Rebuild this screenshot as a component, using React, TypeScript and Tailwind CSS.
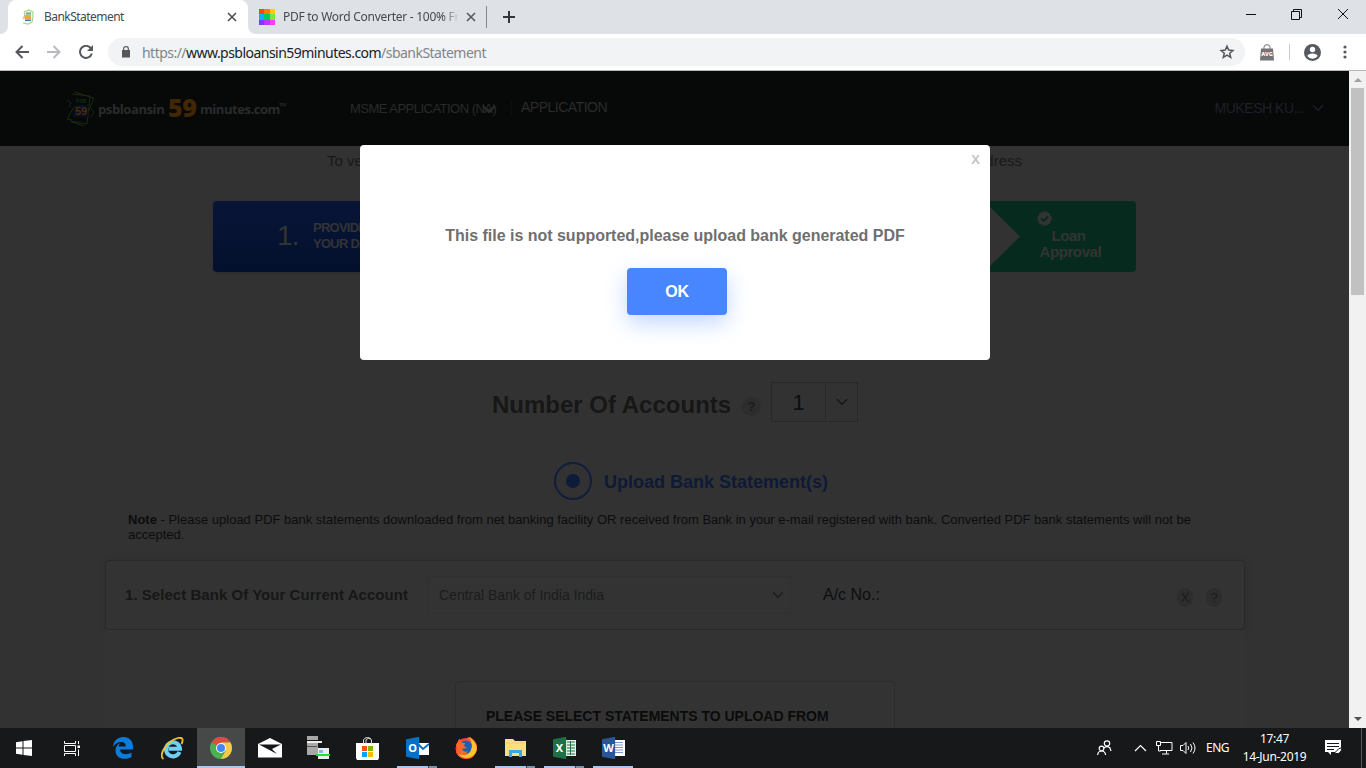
import type { ReactNode } from "react";

const Chevron = ({ className = "" }: { className?: string }) => (
  <svg className={className} width="12" height="8" viewBox="0 0 12 8" fill="none" stroke="currentColor" strokeWidth="1.4">
    <path d="M1 1.2l5 5 5-5" />
  </svg>
);

const Close = ({ className = "" }: { className?: string }) => (
  <svg className={className} width="10" height="10" viewBox="0 0 10 10" stroke="currentColor" strokeWidth="1.6">
    <path d="M1 1l8 8M9 1L1 9" />
  </svg>
);

const tiles = [
  "bg-[#ff4a0c]", "bg-[#ff7e00]", "bg-[#ffcf00]",
  "bg-[#00b4ff]", "bg-[#00cb5e]", "bg-[#7ee53f]",
  "bg-[#7a3cff]", "bg-[#b53cff]", "bg-[#ff3cf0]",
];

function TabStrip() {
  return (
    <div className="flex h-[34px] shrink-0 bg-[#dee1e6] text-[12px] text-[#45494d]">
      <div className="flex h-full w-2 items-end bg-white"><div className="h-full w-full rounded-br-lg bg-[#dee1e6]" /></div>
      <div className="flex w-[240px] items-center rounded-t-lg bg-white pl-3">
        <svg width="16" height="16" viewBox="0 0 16 16" fill="none">
          <path d="M4 3l5-2 4 2v5l-1 5-4 2-5-1M4 3l1 3-2 4" stroke="#a6d48d" strokeWidth="1.2" />
          <path d="M5 4l6-1 1 9-7 1z" fill="#e0efcf" />
          <path d="M6 3.500h5v2H6z" fill="#62b77c" />
          <path d="M4.500 6h6.500v4H4.500z" fill="#eda640" />
          <path d="M5 10.500h6V12H5z" fill="#4a78ba" />
        </svg>
        <span className="ml-2 tracking-[-0.54px]">BankStatement</span>
        <Close className="mr-[11px] ml-auto text-[#4a4e52]" />
      </div>
      <div className="flex h-full w-[11px] bg-white"><div className="h-full w-full rounded-bl-lg bg-[#dee1e6]" /></div>
      <div className="flex w-[228px] items-center border-r border-[#85898e] [border-image:linear-gradient(transparent_20%,#85898e_20%,#85898e_80%,transparent_80%)_1]">
        <div className="grid h-4 w-4 grid-cols-3">{tiles.map((c) => <i key={c} className={c} />)}</div>
        <span className="ml-2 w-[176px] overflow-hidden tracking-[-0.27px] whitespace-nowrap [mask-image:linear-gradient(to_right,#000_91%,transparent)]">PDF to Word Converter - 100% Fr</span>
        <Close className="ml-[7px] text-[#55595d]" />
      </div>
      <div className="flex items-center pl-4">
        <svg width="12" height="12" viewBox="0 0 12 12" stroke="#33373b" strokeWidth="2"><path d="M6 0v12M0 6h12" /></svg>
      </div>
      <div className="mt-[9px] mr-[18px] ml-auto flex h-3 items-center gap-[36px]">
        <svg width="10" height="10" viewBox="0 0 10 10" stroke="#111" className="-mr-px -translate-y-px"><path d="M0 5.5h10" /></svg>
        <svg width="11" height="11" viewBox="0 0 11 11" fill="none" stroke="#111" className="-translate-y-px"><path d="M.5 2.500h8v8h-8zM2.500 2.500v-2h8v8h-2" /></svg>
        <svg width="10" height="10" viewBox="0 0 10 10" stroke="#111" className="-translate-y-px"><path d="M0 0l10 10M10 0L0 10" /></svg>
      </div>
    </div>
  );
}

function Toolbar() {
  return (
    <div className="flex h-[37px] shrink-0 items-center border-b border-[#b5b7b9] bg-white pl-[15px]">
      <svg width="14" height="14" viewBox="0 0 14 14" fill="none" stroke="#54585d" strokeWidth="2"><path d="M14 7H1.5M7.5 1L1.5 7l6 6" /></svg>
      <svg className="ml-[18px]" width="14" height="14" viewBox="0 0 14 14" fill="none" stroke="#b8babd" strokeWidth="2"><path d="M0 7h12.500M6.500 1l6 6-6 6" /></svg>
      <svg className="ml-[18px]" width="14" height="14" viewBox="0 0 14 14" fill="none" stroke="#54585d" strokeWidth="2"><path d="M12 3.500A6 6 0 1 0 12.800 8.500" /><path d="M14 0v6H8z" fill="#54585d" stroke="none" /></svg>
      <div className="ml-[15px] flex h-7 w-[1137px] items-center rounded-full bg-[#f1f3f4]">
        <svg className="ml-[14px]" width="8" height="12" viewBox="0 0 8 12" fill="none"><path d="M0 4h8v7.500H0z" fill="#54585d" /><path d="M1.700 4V2.500a2.300 1.900 0 0 1 4.600 0V4" stroke="#54585d" strokeWidth="1.200" /></svg>
        <span className="ml-3 text-[14px] tracking-[-0.53px] text-[#80868b]">https://<span className="text-[#202124]">www.psbloansin59minutes.com</span>/sbankStatement</span>
        <svg className="mr-[10px] ml-auto" width="16" height="16" viewBox="0 0 16 16" fill="none" stroke="#54585d" strokeWidth="1.500"><path d="M8 2.200l1.700 3.900 4.200.4-3.200 2.800 1 4.100L8 11.200l-3.700 2.200 1-4.100-3.200-2.800 4.200-.4z" /></svg>
      </div>
      <svg className="ml-[15px]" width="14" height="17" viewBox="0 0 14 17"><path d="M1 4.500h12l1 12H0z" fill="#747474" /><path d="M4 5V3a3 2.300 0 0 1 6 0v2" fill="none" stroke="#747474" /><text x="7" y="11.500" fontSize="5.500" fontWeight="800" textAnchor="middle" fill="#fff">AVG</text></svg>
      <div className="ml-[15px] h-4 w-px bg-[#c8cacc]" />
      <svg className="ml-[14px]" width="17" height="17" viewBox="0 0 17 17"><circle cx="8.500" cy="8.500" r="8.500" fill="#565a60" /><circle cx="8.500" cy="5.500" r="2.700" fill="#fff" /><path d="M3.300 12q1-2.600 5.200-2.600t5.200 2.600q-2 2.800-5.200 2.800T3.300 12" fill="#fff" /></svg>
      <svg className="ml-[22px]" width="4" height="14" viewBox="0 0 4 14" fill="#565a60"><circle cx="2" cy="2" r="1.600" /><circle cx="2" cy="7" r="1.600" /><circle cx="2" cy="12" r="1.600" /></svg>
    </div>
  );
}

function SiteHeader() {
  return (
    <header className="flex h-[75px] shrink-0 items-start bg-[#070908] text-[#2b2b2b]">
      <svg className="mt-[20px] ml-[66px]" width="30" height="37" viewBox="0 0 30 37" fill="none">
        <path d="M6 3l18 2-3 28L4 30M9 1l15 5 4 1-5 12M1 28l7-12M1 28l5 1M6 31l12 4" stroke="#1b2812" />
        <path d="M2 9l3 3-2 4M25 18l3 3-3 5" stroke="#243018" strokeDasharray="2 1" />
        <path d="M8 14h14v12H7z" fill="#090e20" />
        <text x="15.500" y="12" textAnchor="middle" fontSize="5" fontWeight="800" fill="#092d16">PSB</text>
        <text x="15" y="24" textAnchor="middle" fontSize="11" fontWeight="800" fill="#4a2d08" fontFamily="Liberation Sans">59</text>
      </svg>
      <div className="mt-[19px] ml-[2px] flex w-[190px] items-baseline font-['Open_Sans',sans-serif] text-[13px] leading-[34px] font-bold">
        <span className="w-[70px] shrink-0 -translate-y-[3px] tracking-[-0.4px]">psbloansin</span>
        <span className="w-[32px] shrink-0 text-[25px] font-extrabold tracking-[-0.5px] text-[#422706]">59</span>
        <span className="w-[79px] shrink-0 -translate-y-[3px] tracking-[-0.45px]">minutes.com</span>
        <span className="-translate-y-[7px] text-[10px]">™</span>
      </div>
      <div className="mt-[30px] ml-[62px] flex w-[148px] items-center text-[13px] leading-4 tracking-[-0.52px] whitespace-nowrap text-[#292929]">
        MSME APPLICATION (NA)<svg className="-ml-[14px] shrink-0" width="14" height="9" viewBox="0 0 14 9" fill="none" stroke="#2b2b2b" strokeWidth="2"><path d="M1 1l6 6 6-6" /></svg>
      </div>
      <div className="mt-[29px] ml-[13px] h-4 w-px bg-[#0c0e0d]" />
      <div className="mt-[28px] ml-[9px] text-[14px] leading-4 tracking-[-0.5px]">APPLICATION</div>
      <div className="mt-[29px] mr-[25px] ml-auto flex items-center gap-2 text-[14px] leading-4 tracking-[-0.45px] text-[#1e1f2b]">
        <span>MUKESH KU...</span><Chevron />
      </div>
    </header>
  );
}

const Hint = ({ children, className = "" }: { children: ReactNode; className?: string }) => (
  <span className={`grid place-items-center rounded-[50%] bg-[#2d2d2d] text-[#1b1b1b] ${className}`}>{children}</span>
);

function Page() {
  return (
    <main className="relative flex w-[1349px] flex-col overflow-hidden bg-[#323232] font-['Liberation_Sans',Arial,sans-serif]">
      <SiteHeader />
      <div className="ml-[327px] flex h-[55px] w-[695px] justify-between pt-[6px] text-[15px] leading-[18px] text-[#191919]">
        <span>To ve</span><span>dress</span>
      </div>
      <div className="ml-[213px] flex h-[71px] w-[923px] shrink-0 justify-between text-[#333]">
        <div className="flex w-[307px] items-center rounded-l bg-linear-to-b from-[#081537] to-[#03102d] pb-[2px] pl-[64px] shadow">
          <span className="w-[36px] text-[28px] tracking-[-1px]">1.</span>
          <span className="text-[13px] leading-4 font-bold tracking-[-0.75px]">PROVIDE<br />YOUR DATA</span>
        </div>
        <div className="flex w-[183px] flex-col rounded-r bg-[#062b1e] pl-[69px] [clip-path:polygon(31px_0,100%_0,100%_100%,31px_100%,67px_35.5px)]">
          <svg className="mt-[10px] ml-[15px]" width="15" height="15" viewBox="0 0 15 15"><circle cx="7.500" cy="7.500" r="6.300" fill="#343434" stroke="#343434" strokeWidth="1.800" strokeDasharray="2.200 1.100" /><path d="M4 7.500L6.700 10 11 5.500" fill="none" stroke="#062b1e" strokeWidth="2" /></svg>
          <div className="mt-[2px] w-[93px] text-center text-[15px] leading-4 font-bold tracking-[-0.4px]">Loan<br />&nbsp;Approval</div>
        </div>
      </div>

      <div className="mt-[110px] ml-[492px] flex h-10 shrink-0">
        <h1 className="w-[250px] text-[24px] leading-[46px] font-bold text-[#171717]">Number Of Accounts</h1>
        <Hint className="mt-[15px] h-[19px] w-[19px] text-[13px] font-bold">?</Hint>
        <div className="ml-[10px] flex w-[87px] border border-[#282828] text-[#0e0e0e]">
          <span className="grid w-[54px] place-items-center border-r border-[#282828] text-[22px]">1</span>
          <span className="grid flex-1 place-items-center"><Chevron className="text-[#151515]" /></span>
        </div>
      </div>

      <div className="mt-[40px] ml-[554px] flex h-[38px] shrink-0 items-center">
        <span className="grid h-[38px] w-[38px] place-items-center rounded-full border-2 border-[#101d3c]"><i className="h-[14px] w-[14px] rounded-full bg-[#0e1b39]" /></span>
        <span className="mt-[2px] ml-3 text-[18px] font-bold text-[#0e1a38]">Upload Bank Statement(s)</span>
      </div>

      <p className="mt-[12px] ml-[128px] h-[30px] w-[1100px] shrink-0 text-[13px] leading-[15px] whitespace-nowrap text-[#0d0d0d]">
        <b>Note</b> - Please upload PDF bank statements downloaded from net banking facility OR received from Bank in your e-mail registered with bank. Converted PDF bank statements will not be<br />accepted.
      </p>

      <section className="mt-[18px] ml-[105px] flex h-[70px] w-[1140px] shrink-0 items-center rounded border border-[#292929] bg-[#333] pl-[19px] shadow-[0_0_8px_#0000001a]">
        <span className="w-[303px] text-[15px] font-bold tracking-[0.04px] text-[#171717]">1. Select Bank Of Your Current Account</span>
        <div className="flex h-[38px] w-[363px] items-center justify-between border border-[#303030] pr-[6px] pl-[10px] text-[14px] text-[#1c1c1c]">
          Central Bank of India India<Chevron />
        </div>
        <span className="ml-[32px] text-[16px] text-[#0e0e0e]">A/c No.:</span>
        <Hint className="mt-[5px] mr-[13px] ml-auto h-[19px] w-4 text-[13px]">X</Hint>
        <Hint className="mt-[5px] mr-[22px] h-[19px] w-4 text-[13px]">?</Hint>
      </section>
      <section className="ml-[105px] flex h-[98px] w-[1140px] shrink-0 bg-[#333]">
        <div className="mt-[51px] ml-[350px] h-[100px] w-[440px] rounded border border-[#2c2c2c] pt-[26px] pl-[30px] text-[14px] leading-4 font-bold tracking-[-0.01px] text-[#0b0b0b]">PLEASE SELECT STATEMENTS TO UPLOAD FROM</div>
      </section>

      <div role="dialog" className="absolute top-[74px] left-[360px] flex h-[215px] w-[630px] flex-col rounded bg-white">
        <button className="absolute top-[7px] right-[10px] text-[13px] leading-4 font-bold text-[#c4c4c4]">X</button>
        <p className="mt-[81px] text-center text-[16px] leading-5 font-bold tracking-[-0.02px] text-[#6f6f6f]">This file is not supported,please upload bank generated PDF</p>
        <button className="mt-[22px] ml-[267px] h-[47px] w-[100px] rounded bg-[#4886ff] text-[16px] font-bold tracking-[-0.3px] text-white shadow-[0_8px_22px_#4886ff55]">OK</button>
      </div>
    </main>
  );
}

function Scrollbar() {
  return (
    <div className="flex w-[17px] flex-col items-center bg-[#f1f1f1]">
      <svg className="mt-[7px]" width="8" height="4" viewBox="0 0 8 4"><path d="M0 4l4-4 4 4z" fill="#a0a0a0" /></svg>
      <div className="mt-[6px] h-[207px] w-[13px] bg-[#c1c1c1]" />
      <svg className="mt-auto mb-[7px]" width="8" height="4" viewBox="0 0 8 4"><path d="M0 0l4 4 4-4z" fill="#505050" /></svg>
    </div>
  );
}

const Office = ({ letter, dark, light, children }: { letter: string; dark: string; light: string; children: ReactNode }) => (
  <svg width="23" height="22" viewBox="0 0 23 22">
    {children}
    <path d="M0 2.500L13 0v22L0 19.500z" fill={dark} stroke={light} strokeWidth=".3" />
    <text x="6.500" y="15" fontSize="11" fontWeight="700" textAnchor="middle" fill="#fff">{letter}</text>
  </svg>
);

const Task = ({ children, mode = "" }: { children: ReactNode; mode?: "" | "active" | "multi" | "single" }) => (
  <div className={`flex w-12 flex-col ${mode === "active" ? "bg-[#474949]" : ""}`}>
    <div className="grid h-[38px] place-items-center pt-[2px]">{children}</div>
    {mode && <div className="ml-1 flex h-[2px] w-10 bg-[#a9c4f5] data-[wide=true]:ml-0 data-[wide=true]:w-12" data-wide={mode === "active"}>{mode === "multi" && <i className="ml-auto w-[9px] border-l border-[#444] bg-[#7b8fb3]" />}</div>}
  </div>
);

function Taskbar() {
  return (
    <footer className="flex h-10 shrink-0 bg-[#17181a] text-white">
      <div className="flex gap-px">
        <Task><svg width="16" height="16" viewBox="0 0 16 16" fill="#fff"><path d="M0 2.200L6.500 1.300v6.200H0zM7.500 1.100L16 0v7.500H7.500zM0 8.500h6.500v6.200L0 13.800zM7.500 8.500H16V16l-8.500-1.100z" /></svg></Task>
        <Task><svg className="mr-[2px]" width="16" height="15" viewBox="0 0 16 15" fill="none" stroke="#fff"><path d="M.5 0v2.500h11V0M.5 15v-2.500h11V15M.5 4.500h11v6H.5zM14.500 0v3M14.500 8.500V15" /><path d="M13.500 4.500h2.500v2.500h-2.500z" fill="#fff" stroke="none" /></svg></Task>
        <div className="pl-px"><Task><svg width="20" height="22" viewBox="0 0 20 22"><path d="M0 10C.5 3.500 5 0 10.500 0 17 0 20 4.500 20 10v2.500H7c.2 5 7 6 11.500 3v4.500c-5 3-16 3-16-6.500 0-4 2.500-6.500 5-7.500-1 1-1.500 2-1.700 3.500h7c0-3-1.500-4.500-4.500-4.500C5 5 2 6.500 0 10z" fill="#0b7bdc" /></svg></Task></div>
        <Task><svg width="23" height="23" viewBox="0 0 23 23" fill="none"><path d="M18.500 15a7 7 0 1 1 .5-3.200H7.500" stroke="#6fd0f5" strokeWidth="4" /><path d="M2.500 22C-3 19 5 4 17 1c5-1.200 5.500 2 3.500 6" stroke="#f0c52c" strokeWidth="1.800" /></svg></Task>
        <Task mode="active"><svg width="22" height="22" viewBox="0 0 22 22"><circle cx="11" cy="11" r="11" fill="#4caf50" /><path d="M11 11L1.500 5.500A11 11 0 0 1 20.500 5.500H11z" fill="#df4b40" /><path d="M11 5.500h9.500A11 11 0 0 1 11 22l4.700-8.200z" fill="#f7c94a" /><path d="M1.500 5.500l4.800 8.300L11 11z" fill="#4caf50" /><circle cx="11" cy="11" r="5" fill="#fff" /><circle cx="11" cy="11" r="4" fill="#4285f4" /></svg></Task>
        <Task><svg width="24" height="20" viewBox="0 0 24 20"><path d="M0 6L12 0l12 6v13.500H0z" fill="#fff" /><path d="M1 6.500h22L14 11l5 5-18-9.500z" fill="#17181a" /></svg></Task>
        <Task><svg className="-translate-x-px" width="24" height="24" viewBox="0 0 24 24"><path d="M1 0h11v4H1zM1 7h11v12H1z" fill="#a8a8a8" /><path d="M1 5h15v2H1z" fill="#eee" /><path d="M1 10h10v1H1z" fill="#555" /><path d="M12 12h11v11H12z" fill="#eee" /><path d="M13 14h4v3h-4z" fill="#79baf0" /><path d="M10 18h14v2H10z" fill="#28dc36" /></svg></Task>
        <Task><svg className="-translate-x-px" width="23" height="23" viewBox="0 0 23 23"><path d="M0 6h23v15l-1 2H1l-1-2z" fill="#fff" /><path d="M7.500 7V3q1-2.500 4-2.500t4 2.500v4M10 7V3q2-3 5-1" fill="none" stroke="#ddd" /><path d="M6 9h5v5H6z" fill="#f25022" /><path d="M12 9h5v5h-5z" fill="#7fba00" /><path d="M6 15h5v5H6z" fill="#00a4ef" /><path d="M12 15h5v5h-5z" fill="#ffb900" /></svg></Task>
        <Task mode="multi"><Office letter="O" dark="#0871c5" light="#1689dd"><path d="M11 6h12v12H11z" fill="#fff" /><path d="M12 7l5 5 6-5" fill="none" stroke="#0871c5" strokeWidth="2" /></Office></Task>
        <Task><svg width="22" height="22" viewBox="0 0 22 22"><circle cx="11" cy="11.500" r="10.500" fill="#f33f4b" /><path d="M3 4Q5 0 6 4l5-1q1-3 4-3 8 5 7 12-2 10-11 10Q4 22 1 15z" fill="#fa5a2c" /><circle cx="11" cy="10" r="6.500" fill="#1c60b5" /><path d="M14 0q9 6 7.500 14-3 7-10 7-5 0-8-4 9 3 12-3Q19 7 14 0z" fill="#ffc42a" /><path d="M1 8l3-5 3 3h3L9 9l3 2-5 1q2 4 6 2-4 6-9 2z" fill="#f7692b" /></svg></Task>
        <Task mode="multi"><svg width="21" height="18" viewBox="0 0 21 18"><path d="M0 0h8l2 2h11v15H0z" fill="#fbdd83" /><path d="M1 4h19" stroke="#e8cb75" /><path d="M4 18v-7h13v7h-3v-4H7v4z" fill="#38a9e5" /></svg></Task>
        <Task mode="multi"><Office letter="X" dark="#1d7044" light="#36865b"><path d="M12 3h11v16H12z" fill="#e8f2ec" /><path d="M14 5h8M14 8h8M14 11h8M14 14h8M14 17h8M17.500 4v14" stroke="#217346" /></Office></Task>
        <Task mode="single"><Office letter="W" dark="#2a5699" light="#3974bd"><path d="M12 3h11v16H12z" fill="#fff" /><path d="M13 5.500h8M13 8h8M13 10.500h8M13 13h8M13 15.500h8" stroke="#7897ce" /></Office></Task>
      </div>
      <div className="ml-auto flex items-center text-[12px]">
        <svg width="15" height="16" viewBox="0 0 15 16" fill="none" stroke="#fff" strokeWidth="1.200"><circle cx="10" cy="3.500" r="2.700" /><circle cx="4.500" cy="8.500" r="2.300" /><path d="M.6 15q.5-4 4-4t4 4M7 8q3-3 6 0l1 3" /></svg>
        <svg className="ml-[22px]" width="13" height="8" viewBox="0 0 13 8" fill="none" stroke="#fff" strokeWidth="1.200"><path d="M1 7l5.500-5.500L12 7" /></svg>
        <svg className="ml-[9px]" width="17" height="14" viewBox="0 0 17 14" fill="none" stroke="#fff"><path d="M4 1.500h12v8H4M.5.500h4v4h-4zM2.500 4.500V10h2M10.500 9.500v3M6 13h7" /></svg>
        <svg className="ml-[7px]" width="17" height="14" viewBox="0 0 17 14" fill="none" stroke="#fff"><path d="M.5 4.500h2.500l3-3v11l-3-3H.5zM8 5q1.500 2 0 4M10.500 3q3 4 0 8M13 1.500q4 5.500 0 11" /></svg>
        <span className="ml-[9px] w-[24px] tracking-[-0.5px]">ENG</span>
        <div className="ml-[9px] w-[71px] text-center leading-[18px] tracking-[-0.3px]">17:47<br />14-Jun-2019</div>
        <svg className="ml-[15px]" width="17" height="16" viewBox="0 0 17 16"><path d="M0 0h16v12H6v3l-3-3H0z" fill="#fff" /><path d="M2 3.500h12M2 6.500h12M2 9.500h7" stroke="#17181a" /><path d="M10 12.500q4-5 7-5-1 7-6 6z" fill="#fff" stroke="#17181a" /></svg>
        <div className="mr-[4px] ml-[19px] h-10 w-px bg-[#555]" />
      </div>
    </footer>
  );
}

export default function App() {
  return (
    <div className="flex h-[768px] w-[1366px] flex-col overflow-hidden font-['Noto_Sans',sans-serif]">
      <TabStrip />
      <Toolbar />
      <div className="flex h-[657px] shrink-0"><Page /><Scrollbar /></div>
      <Taskbar />
    </div>
  );
}
